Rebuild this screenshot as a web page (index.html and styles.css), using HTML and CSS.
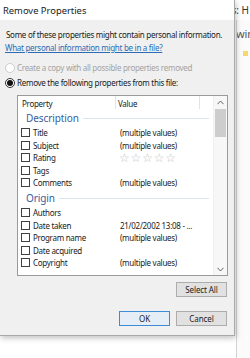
FILE: index.html
```html
<!DOCTYPE html>
<html>
<head>
<meta charset="utf-8">
<link rel="stylesheet" href="styles.css">
</head>
<body>
<div class="desktop">
  <div class="behind">
    <div class="behind-top"><span class="behind-title">Authors: H</span></div>
    <div class="behind-body">
      <div class="behind-text">Edwin</div>
      <div class="behind-swatch"></div>
    </div>
  </div>

  <div class="dialog">
    <div class="titlebar">Remove Properties</div>
    <div class="content">
      <p class="intro">Some of these properties might contain personal information.</p>
      <a class="link" href="#">What personal information might be in a file?</a>

      <div class="radio-row disabled">
        <span class="radio"></span>
        <span>Create a copy with all possible properties removed</span>
      </div>
      <div class="radio-row">
        <span class="radio checked"></span>
        <span>Remove the following properties from this file:</span>
      </div>

      <div class="listbox">
        <div class="list-main">
          <div class="list-header">
            <div class="col col-prop">Property</div>
            <div class="col col-val">Value</div>
            <div class="col col-rest"></div>
          </div>
          <div class="rows">
            <div class="group"><span class="group-label">Description</span><span class="group-line"></span></div>
            <div class="row"><span class="check"></span><span class="name">Title</span><span class="value">(multiple values)</span></div>
            <div class="row"><span class="check"></span><span class="name">Subject</span><span class="value">(multiple values)</span></div>
            <div class="row"><span class="check"></span><span class="name">Rating</span><span class="value stars">☆☆☆☆☆</span></div>
            <div class="row"><span class="check"></span><span class="name">Tags</span><span class="value"></span></div>
            <div class="row"><span class="check"></span><span class="name">Comments</span><span class="value">(multiple values)</span></div>
            <div class="group"><span class="group-label">Origin</span><span class="group-line"></span></div>
            <div class="row"><span class="check"></span><span class="name">Authors</span><span class="value"></span></div>
            <div class="row"><span class="check"></span><span class="name">Date taken</span><span class="value">21/02/2002 13:08 - ...</span></div>
            <div class="row"><span class="check"></span><span class="name">Program name</span><span class="value">(multiple values)</span></div>
            <div class="row"><span class="check"></span><span class="name">Date acquired</span><span class="value"></span></div>
            <div class="row"><span class="check"></span><span class="name">Copyright</span><span class="value">(multiple values)</span></div>
          </div>
        </div>
        <div class="scrollbar">
          <svg class="arrow" width="7" height="5" viewBox="0 0 7 5"><path d="M0.5 4.2 L3.5 1 L6.5 4.2" fill="none" stroke="#606060" stroke-width="1"/></svg>
          <div class="track"><div class="thumb"></div></div>
          <svg class="arrow" width="7" height="5" viewBox="0 0 7 5"><path d="M0.5 0.8 L3.5 4 L6.5 0.8" fill="none" stroke="#606060" stroke-width="1"/></svg>
        </div>
      </div>

      <div class="btn-row first">
        <button class="btn">Select All</button>
      </div>
      <div class="btn-row last">
        <button class="btn default">OK</button>
        <button class="btn">Cancel</button>
      </div>
    </div>
  </div>
</div>
</body>
</html>
```

FILE: styles.css
```css
* { box-sizing: border-box; }
html, body {
  margin: 0;
  padding: 0;
  width: 250px;
  height: 358px;
  overflow: hidden;
  background: #ffffff;
  font-family: "Noto Sans", "Open Sans", sans-serif;
  font-size: 8px;
  letter-spacing: -0.28px;
  color: #1a1a1a;
}
.desktop {
  position: relative;
  width: 250px;
  height: 358px;
}

/* window behind the dialog */
.behind {
  position: absolute;
  left: 190px;
  top: 0;
  width: 60px;
  height: 358px;
  background: #ffffff;
}
.behind-top {
  height: 20px;
  display: flex;
  align-items: center;
  justify-content: flex-end;
  padding-right: 1px;
  font-size: 10px;
  letter-spacing: 0;
  color: #333;
  white-space: nowrap;
  overflow: hidden;
}
.behind-body {
  margin-left: 46px;
  height: 338px;
  border-left: 1px solid #d4d4d4;
  background: #fbfbfb;
  overflow: hidden;
}
.behind-text {
  font-size: 11px;
  letter-spacing: 0;
  color: #555;
  padding-top: 6px;
  margin-left: -14px;
  white-space: nowrap;
}
.behind-swatch {
  margin-top: 10px;
  margin-left: 6px;
  width: 5px;
  height: 5px;
  background: #f5d76e;
}

/* dialog window */
.dialog {
  position: absolute;
  left: 0;
  top: 0;
  width: 235px;
  height: 336px;
  background: #f0f0f0;
  border-right: 1px solid #a9a9a9;
  border-bottom: 1px solid #a9a9a9;
  box-shadow: 1px 2px 6px rgba(0,0,0,0.25);
  display: flex;
  flex-direction: column;
}
.titlebar {
  height: 20px;
  background: #ffffff;
  padding-left: 3px;
  display: flex;
  align-items: center;
  font-size: 9.4px;
  letter-spacing: 0;
  color: #1a1a1a;
}
.content {
  flex: 1;
  padding: 8px 7px 0 6px;
  display: flex;
  flex-direction: column;
}
.intro {
  margin: 0;
  line-height: 13px;
  height: 13px;
  white-space: nowrap;
}
.link {
  display: block;
  color: #2a6db5;
  text-decoration: underline;
  line-height: 13px;
  height: 13px;
  margin-left: -1px;
  white-space: nowrap;
}
.radio-row {
  display: flex;
  align-items: center;
  gap: 2px;
  height: 15px;
  margin-left: -1px;
  white-space: nowrap;
}
.radio-row.disabled {
  margin-top: 6px;
  color: #a3a3a3;
}
.radio {
  width: 10px;
  height: 10px;
  border-radius: 50%;
  border: 1px solid #333;
  background: #fff;
  flex: none;
  display: flex;
  align-items: center;
  justify-content: center;
}
.disabled .radio { border-color: #cccccc; }
.radio.checked::after {
  content: "";
  width: 6px;
  height: 6px;
  border-radius: 50%;
  background: #111;
}

/* list */
.listbox {
  margin-top: 5px;
  margin-left: 11px;
  width: 211px;
  height: 181px;
  background: #ffffff;
  border: 1px solid #9a9a9a;
  display: flex;
}
.list-main {
  flex: 1;
  display: flex;
  flex-direction: column;
  min-width: 0;
}
.list-header {
  height: 13px;
  display: flex;
  flex: none;
}
.col {
  line-height: 15px;
  height: 13px;
  padding-left: 4px;
  color: #222;
}
.col-prop { width: 98px; border-right: 1px solid #e3e3e3; }
.col-val { width: 84px; border-right: 1px solid #e3e3e3; padding-left: 2px; }
.col-rest { flex: 1; }
.rows {
  display: flex;
  flex-direction: column;
}
.group {
  height: 17.5px;
  display: flex;
  align-items: center;
  padding-left: 8px;
  padding-right: 4px;
}
.group-label {
  color: #3a5b9e;
  font-size: 10px;
  letter-spacing: -0.1px;
  white-space: nowrap;
}
.group-line {
  flex: 1;
  height: 1px;
  background: #dde3ec;
  margin-left: 4px;
  margin-top: 1px;
}
.row {
  height: 12.5px;
  display: flex;
  align-items: center;
  padding-left: 3px;
  white-space: nowrap;
}
.check {
  width: 9px;
  height: 9px;
  border: 1px solid #404040;
  background: #fff;
  flex: none;
}
.name {
  width: 87px;
  padding-left: 3px;
}
.value {
  padding-left: 3px;
}
.stars {
  color: #c2c2c2;
  font-family: "DejaVu Sans", sans-serif;
  font-size: 12px;
  letter-spacing: 0.8px;
  padding-left: 2px;
}

.scrollbar {
  width: 14px;
  flex: none;
  display: flex;
  flex-direction: column;
  align-items: center;
  background: #f7f7f7;
  padding: 4px 0 3px;
  border-left: 1px solid #f0f0f0;
}
.arrow { flex: none; }
.track {
  flex: 1;
  width: 100%;
  padding: 4px 1px 0 1px;
}
.thumb {
  height: 28px;
  background: #cdcdcd;
}

.btn-row {
  display: flex;
  justify-content: flex-end;
  gap: 6px;
}
.btn-row.first { margin-top: 6px; }
.btn-row.last { margin-top: 14px; }
.btn {
  width: 51px;
  height: 15px;
  padding: 0;
  background: #e1e1e1;
  border: 1px solid #adadad;
  font-family: "Noto Sans", "Open Sans", sans-serif;
  font-size: 8px;
  letter-spacing: -0.1px;
  color: #1a1a1a;
  line-height: 12px;
}
.btn.default {
  border-color: #3d8bd4;
  background: #e5eef6;
}
```
